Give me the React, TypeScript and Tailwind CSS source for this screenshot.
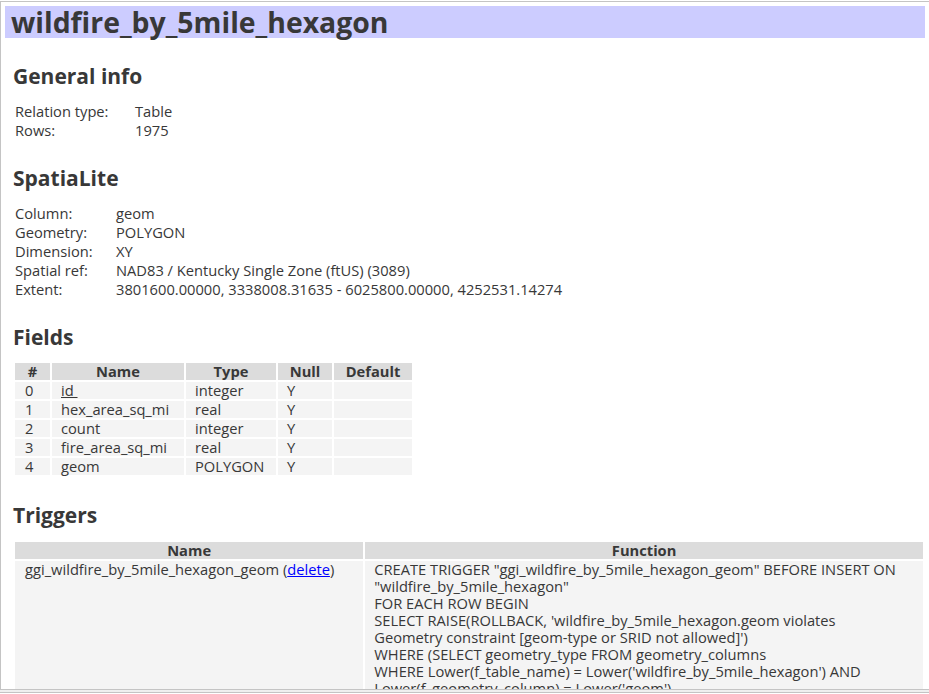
import React from 'react';

const general = [
  ['Relation type:', 'Table'],
  ['Rows:', '1975'],
];

const spatial = [
  ['Column:', 'geom'],
  ['Geometry:', 'POLYGON'],
  ['Dimension:', 'XY'],
  ['Spatial ref:', 'NAD83 / Kentucky Single Zone (ftUS) (3089)'],
  ['Extent:', '3801600.00000, 3338008.31635 - 6025800.00000, 4252531.14274'],
];

const fields = [
  ['0', 'id', 'integer', 'Y', ''],
  ['1', 'hex_area_sq_mi', 'real', 'Y', ''],
  ['2', 'count', 'integer', 'Y', ''],
  ['3', 'fire_area_sq_mi', 'real', 'Y', ''],
  ['4', 'geom', 'POLYGON', 'Y', ''],
];

// the rest of the trigger body is scrolled out of view
const fnLines = [
  'CREATE TRIGGER "ggi_wildfire_by_5mile_hexagon_geom" BEFORE INSERT ON',
  '"wildfire_by_5mile_hexagon"',
  'FOR EACH ROW BEGIN',
  "SELECT RAISE(ROLLBACK, 'wildfire_by_5mile_hexagon.geom violates",
  "Geometry constraint [geom-type or SRID not allowed]')",
  'WHERE (SELECT geometry_type FROM geometry_columns',
  "WHERE Lower(f_table_name) = Lower('wildfire_by_5mile_hexagon') AND",
  "Lower(f_geometry_column) = Lower('geom')",
];

function Heading({ children, className = '' }: { children: React.ReactNode; className?: string }) {
  return <h2 className={`text-[21px] font-bold leading-[24px] ${className}`}>{children}</h2>;
}

function InfoRows({ rows, labelW }: { rows: string[][]; labelW: string }) {
  return (
    <div className="mt-[14px] pl-[2px]">
      {rows.map(([k, v]) => (
        <div key={k} className="flex h-[19px] leading-[19px]">
          <div className={labelW}>{k}</div>
          <div>{v}</div>
        </div>
      ))}
    </div>
  );
}

export default function App() {
  return (
    <div className="h-[694px] w-[929px] bg-white pt-[1px] text-[14.7px] text-[#383838] font-['Open_Sans',sans-serif] overflow-hidden">
      <div className="h-[689px] border-t border-b border-l border-[#c4c4c4] overflow-hidden pl-[4px] pr-[4px] pt-[4px]">
        <h1 className="h-[32px] bg-[#ccccff] pl-[6px] text-[28.4px] font-bold leading-[33px]">
          wildfire_by_5mile_hexagon
        </h1>

        <div className="pl-[8px]">
          <Heading className="mt-[26px]">General info</Heading>
          <InfoRows rows={general} labelW="w-[120px]" />

          <Heading className="mt-[26px]">SpatiaLite</Heading>
          <InfoRows rows={spatial} labelW="w-[101px]" />

          <Heading className="mt-[26px]">Fields</Heading>
          <table className="mt-[12px] border-separate border-spacing-[2px] leading-[17px]">
            <thead>
              <tr className="bg-[#dcdcdc] font-bold">
                <th className="w-[35px] h-[17px] p-0 text-center">#</th>
                <th className="w-[132px] p-0 text-center">Name</th>
                <th className="w-[90px] p-0 text-center">Type</th>
                <th className="w-[54px] p-0 text-center">Null</th>
                <th className="w-[78px] p-0 text-center">Default</th>
              </tr>
            </thead>
            <tbody>
              {fields.map((r) => (
                <tr key={r[0]} className="bg-[#f4f4f4]">
                  <td className="h-[17px] p-0 pl-[10px]">{r[0]}</td>
                  <td className="p-0 pl-[9px]">
                    {r[1] === 'id' ? <span className="underline">id&nbsp;</span> : r[1]}
                  </td>
                  <td className="p-0 pl-[9px]">{r[2]}</td>
                  <td className="p-0 pl-[9px]">{r[3]}</td>
                  <td className="p-0 pl-[9px]">{r[4]}</td>
                </tr>
              ))}
            </tbody>
          </table>

          <Heading className="mt-[26px]">Triggers</Heading>
          <table className="mt-[13px] border-separate border-spacing-[2px] leading-[17px]">
            <thead>
              <tr className="bg-[#dcdcdc] font-bold">
                <th className="w-[349px] h-[17px] p-0 text-center">Name</th>
                <th className="w-[558px] p-0 text-center">Function</th>
              </tr>
            </thead>
            <tbody>
              <tr className="bg-[#f4f4f4] align-top">
                <td className="p-0 pl-[10px]">
                  ggi_wildfire_by_5mile_hexagon_geom (
                  <a href="#" className="text-[#0000ff] underline">delete</a>)
                </td>
                <td className="p-0 pl-[9px]">
                  {fnLines.map((l, i) => (
                    <div key={i} className="whitespace-nowrap">{l}</div>
                  ))}
                </td>
              </tr>
            </tbody>
          </table>
        </div>
      </div>
      <div className="h-[1px] bg-[#efefef]" />
      <div className="h-[1px] bg-[#efefef]" />
      <div className="h-[1px] bg-[#c4c4c4]" />
    </div>
  );
}
